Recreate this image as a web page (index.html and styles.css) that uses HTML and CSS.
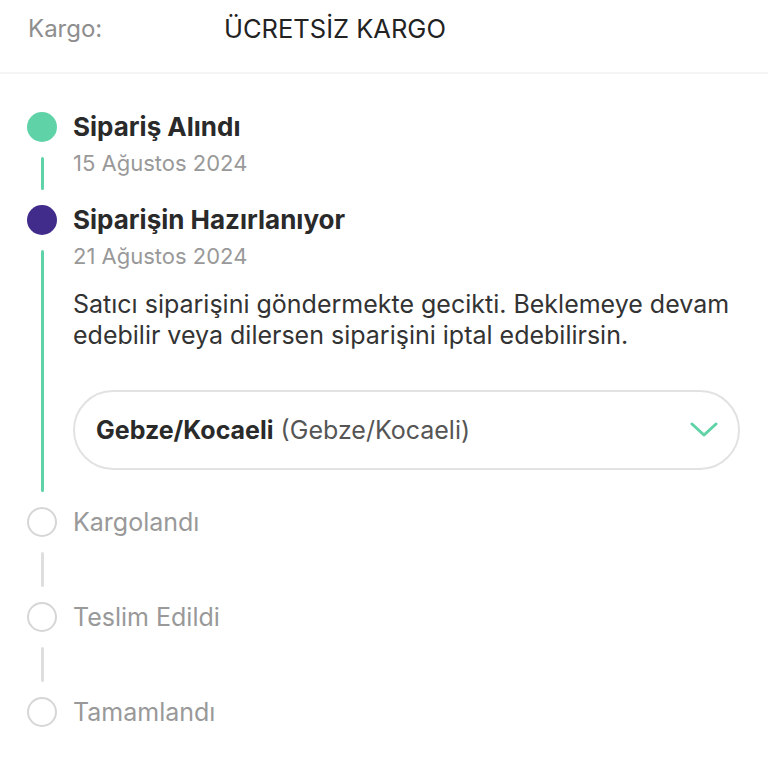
FILE: index.html
```html
<!DOCTYPE html>
<html lang="tr">
<head>
    <meta charset="UTF-8">
    <meta name="viewport" content="width=device-width, initial-scale=1.0">
    <title>Sipariş Takibi</title>
    <link rel="stylesheet" href="styles.css">
</head>
<body>
    <div class="cargo-row">
        <span class="cargo-label">Kargo:</span>
        <span class="cargo-value">ÜCRETSİZ KARGO</span>
    </div>

    <div class="timeline">
        <!-- Sipariş alındı -->
        <div class="step done">
            <div class="rail"><span class="dot"></span><span class="line"></span></div>
            <div class="step-body">
                <div class="step-title">Sipariş Alındı</div>
                <div class="step-date">15 Ağustos 2024</div>
            </div>
        </div>

        <!-- Aktif adım -->
        <div class="step active">
            <div class="rail"><span class="dot"></span><span class="line"></span></div>
            <div class="step-body">
                <div class="step-title">Siparişin Hazırlanıyor</div>
                <div class="step-date">21 Ağustos 2024</div>
                <p class="step-note">Satıcı siparişini göndermekte gecikti. Beklemeye devam edebilir veya dilersen siparişini iptal edebilirsin.</p>
                <div class="select">
                    <span class="select-text"><b>Gebze/Kocaeli</b> (Gebze/Kocaeli)</span>
                    <svg class="chevron" width="28" height="16" viewBox="0 0 28 16">
                        <path d="M2 2 L14 13 L26 2" fill="none" stroke="#5fd3a7" stroke-width="3" stroke-linecap="round" stroke-linejoin="round"/>
                    </svg>
                </div>
            </div>
        </div>

        <div class="step pending">
            <div class="rail"><span class="dot"></span><span class="line"></span></div>
            <div class="step-body">
                <div class="step-title">Kargolandı</div>
            </div>
        </div>

        <div class="step pending">
            <div class="rail"><span class="dot"></span><span class="line"></span></div>
            <div class="step-body">
                <div class="step-title">Teslim Edildi</div>
            </div>
        </div>

        <div class="step pending last">
            <div class="rail"><span class="dot"></span></div>
            <div class="step-body">
                <div class="step-title">Tamamlandı</div>
            </div>
        </div>
    </div>
</body>
</html>
```

FILE: styles.css
```css
body {
    margin: 0;
    background: #fff;
    font-family: Inter, "Noto Sans", sans-serif;
    color: #2a2a2a;
}
.cargo-row {
    display: flex;
    align-items: flex-start;
    height: 58px;
    padding: 14px 28px 0;
    border-bottom: 2px solid #f5f5f5;
    line-height: 30px;
}
.cargo-label {
    width: 196px;
    color: #8e8e8e;
    font-size: 24px;
}
.cargo-value {
    color: #222;
    font-size: 25.5px;
}
.timeline {
    padding: 38px 28px 0 27px;
}
.step {
    display: flex;
    gap: 16px;
}
.rail {
    width: 30px;
    display: flex;
    flex-direction: column;
    align-items: center;
}
.dot {
    width: 30px;
    height: 30px;
    border-radius: 50%;
    box-sizing: border-box;
    flex-shrink: 0;
}
.line {
    flex: 1;
    width: 3px;
    margin: 15px 0;
    border-radius: 2px;
}
.step-body {
    flex: 1;
    padding-bottom: 29px;
}
.step-title {
    font-size: 26px;
    font-weight: 700;
    line-height: 30px;
    color: #2a2a2a;
}
.step-date {
    margin-top: 8px;
    font-size: 22px;
    line-height: 26px;
    color: #999;
}
.step-note {
    margin: 20px 0 0;
    font-size: 25px;
    line-height: 31px;
    color: #333;
}
.select {
    margin-top: 39px;
    height: 80px;
    box-sizing: border-box;
    border: 2px solid #e2e2e2;
    border-radius: 40px;
    display: flex;
    align-items: center;
    justify-content: space-between;
    padding: 0 20px 0 21px;
}
.select-text {
    font-size: 25px;
    color: #555;
}
.select-text b {
    color: #2a2a2a;
}
.done .dot { background: #5fd3a7; }
.done .line,
.active .line { background: #5fd3a7; }
.active .dot { background: #412c8c; }
.active .step-body { padding-bottom: 37px; }
.pending .dot { border: 2px solid #d6d6d6; }
.pending .line { background: #dedede; }
.pending .step-body { padding-bottom: 65px; }
.pending .step-title {
    font-size: 25px;
    font-weight: 400;
    color: #999;
}
.last .step-body { padding-bottom: 20px; }
```
